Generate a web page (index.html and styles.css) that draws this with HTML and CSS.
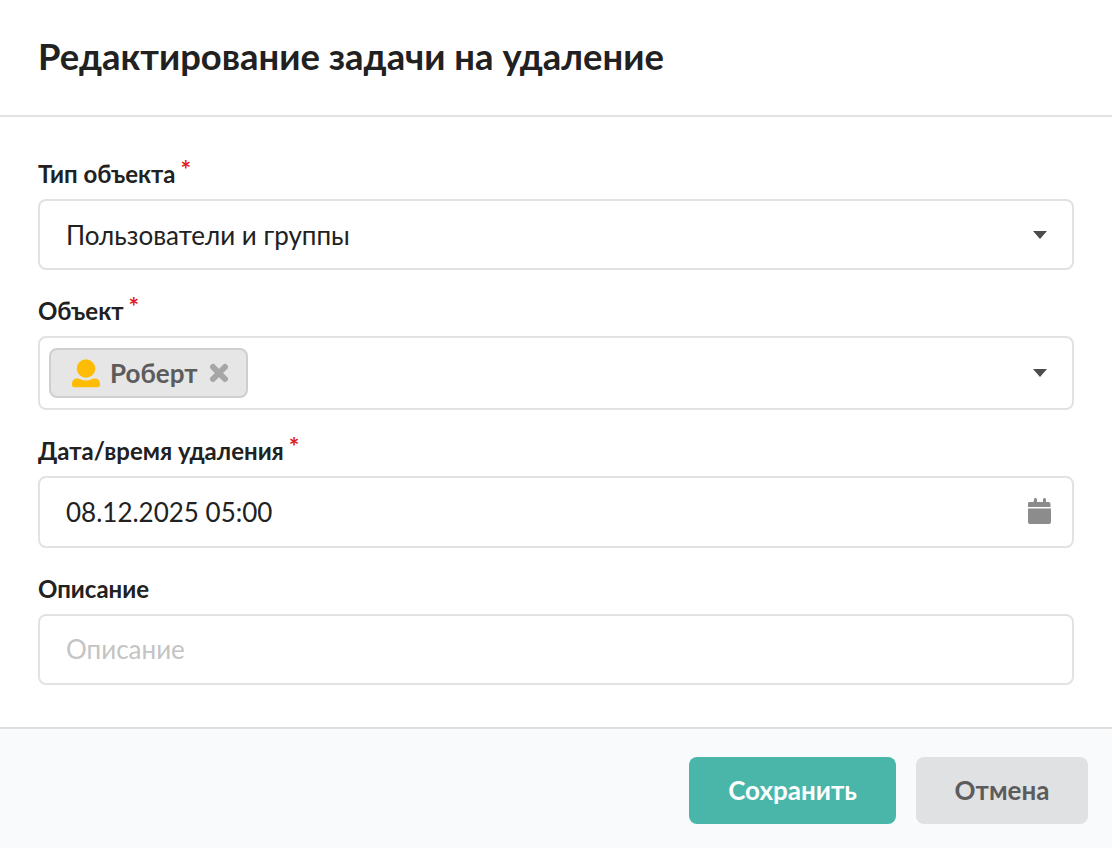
FILE: index.html
```html
<!DOCTYPE html>
<html lang="ru">

<head>
    <meta charset="UTF-8">
    <meta name="viewport" content="width=device-width, initial-scale=1.0">
    <title>Редактирование задачи на удаление</title>
    <link rel="stylesheet" href="styles.css">
</head>

<body>
    <div class="modal">
        <header class="modal-header">
            <h1>Редактирование задачи на удаление</h1>
        </header>

        <form class="modal-body">
            <div class="field">
                <label class="field-label required">Тип объекта</label>
                <div class="control control-select">
                    <span class="control-value">Пользователи и группы</span>
                    <span class="caret"></span>
                </div>
            </div>

            <div class="field">
                <label class="field-label required">Объект</label>
                <div class="control control-select control-tags">
                    <span class="tag">
                        <svg class="tag-user" viewBox="0 0 29 29" width="29" height="29">
                            <circle cx="14" cy="9.500" r="9.300" fill="#ffbc05"/>
                            <path d="M0 24.500c0-3 2.300-5 5-5 2.500 0 5 2 9 2s6.500-2 9-2c2.700 0 5 2 5 5v1.500c0 1.300-1 2.300-2.300 2.300h-23.400c-1.300 0-2.300-1-2.300-2.300z" fill="#ffbc05"/>
                        </svg>
                        <span class="tag-name">Роберт</span>
                        <svg class="tag-remove" viewBox="0 0 20 20" width="20" height="20">
                            <path d="M4 4l12 12M16 4l-12 12" stroke="#a6a6a6" stroke-width="6" stroke-linecap="round" fill="none"/>
                        </svg>
                    </span>
                    <span class="caret"></span>
                </div>
            </div>

            <div class="field">
                <label class="field-label required">Дата/время удаления</label>
                <div class="control control-date">
                    <span class="control-value">08.12.2025 05:00</span>
                    <svg class="calendar" viewBox="0 0 23 26" width="23" height="26">
                        <path d="M6 1.500c0-.8.7-1.500 1.500-1.500s1.500.7 1.500 1.500v2.500h6v-2.500c0-.8.7-1.500 1.500-1.500s1.500.7 1.500 1.500v2.500h2.500c1.100 0 2 .9 2 2v3h-23v-3c0-1.100.9-2 2-2h4z" fill="#8c8c8c"/>
                        <path d="M0 10.500h23v13.500c0 1.100-.9 2-2 2h-19c-1.100 0-2-.9-2-2z" fill="#8c8c8c"/>
                    </svg>
                </div>
            </div>

            <div class="field">
                <label class="field-label">Описание</label>
                <div class="control">
                    <span class="control-placeholder">Описание</span>
                </div>
            </div>
        </form>

        <footer class="modal-footer">
            <button type="button" class="btn btn-primary">Сохранить</button>
            <button type="button" class="btn btn-cancel">Отмена</button>
        </footer>
    </div>
</body>

</html>
```

FILE: styles.css
```css
html,
body {
    height: 100%;
}

body {
    margin: 0;
    background-color: #fff;
    color: #212121;
    font-family: 'Lato', 'Noto Sans', sans-serif;
}

.modal {
    display: flex;
    flex-direction: column;
    height: 848px;
}

.modal-header {
    height: 115px;
    display: flex;
    align-items: center;
    padding: 0 38px;
    border-bottom: 2px solid #e2e2e2;
}

.modal-header h1 {
    margin: 0 0 3px;
    font-size: 36.4px;
    font-weight: 700;
}

.modal-body {
    flex: 1;
    padding: 39px 38px 0;
}

.field {
    margin-bottom: 23px;
}

.field-label {
    display: block;
    height: 43px;
    line-height: 36px;
    font-size: 24px;
    font-weight: 700;
}

.required::after {
    content: "*";
    margin-left: 5px;
    color: #e02020;
    font-size: 25px;
    line-height: 0;
    vertical-align: 4px;
}

.control {
    display: flex;
    align-items: center;
    justify-content: space-between;
    box-sizing: border-box;
    height: 71px;
    padding: 0 24px 0 26px;
    border: 2px solid #e2e2e2;
    border-radius: 8px;
    font-size: 26px;
}

.control-tags {
    height: 74px;
    padding-left: 9px;
}

.control-date {
    height: 72px;
}

.control-placeholder {
    color: #c4c4c4;
    margin-top: -2px;
}

.caret {
    width: 0;
    height: 0;
    margin-right: 1px;
    border-left: 7px solid transparent;
    border-right: 7px solid transparent;
    border-top: 8px solid #4d4d4d;
}

.tag {
    display: flex;
    align-items: center;
    box-sizing: border-box;
    height: 50px;
    padding: 0 17px 0 21px;
    background-color: #e6e6e6;
    border: 2px solid #cfcfcf;
    border-radius: 8px;
    color: #5c5c5c;
    font-weight: 700;
}

.tag-name {
    margin: 0 11px 0 9px;
}

.calendar {
    margin-right: -3px;
    margin-bottom: 2px;
}

.modal-footer {
    display: flex;
    justify-content: flex-end;
    gap: 20px;
    height: 121px;
    padding: 28px 24px 0 0;
    box-sizing: border-box;
    background-color: #f9fafc;
    border-top: 2px solid #dedede;
}

.btn {
    height: 67px;
    padding-bottom: 3px;
    border: none;
    border-radius: 8px;
    font-family: inherit;
    font-size: 26px;
    font-weight: 700;
}

.btn-primary {
    width: 207px;
    background-color: #4ab6aa;
    color: #fff;
}

.btn-cancel {
    width: 172px;
    background-color: #e0e1e3;
    color: #5c5c5c;
}
```
